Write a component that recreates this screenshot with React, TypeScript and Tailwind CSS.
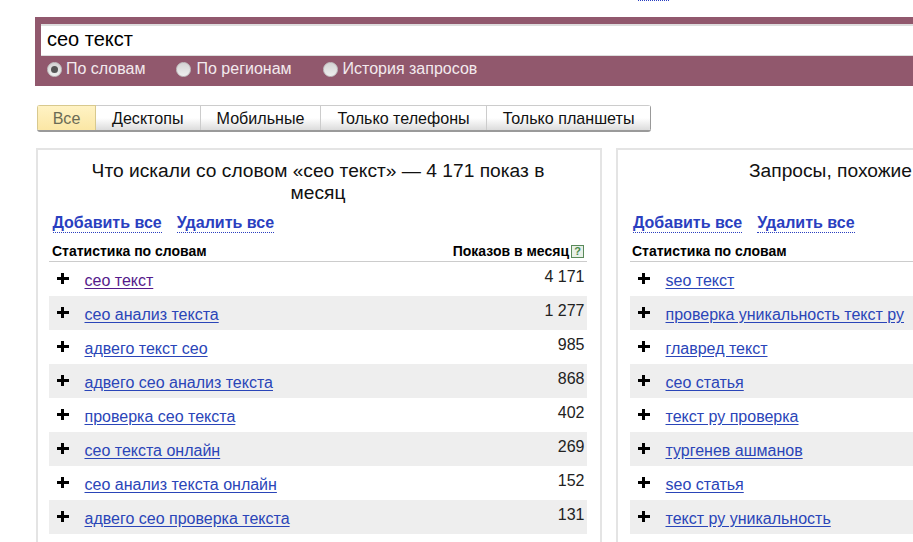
const left: [string, string, boolean][] = [
  ["сео текст", "4 171", true],
  ["сео анализ текста", "1 277", false],
  ["адвего текст сео", "985", false],
  ["адвего сео анализ текста", "868", false],
  ["проверка сео текста", "402", false],
  ["сео текста онлайн", "269", false],
  ["сео анализ текста онлайн", "152", false],
  ["адвего сео проверка текста", "131", false],
];
const right: string[] = [
  "seo текст",
  "проверка уникальность текст ру",
  "главред текст",
  "сео статья",
  "текст ру проверка",
  "тургенев ашманов",
  "seo статья",
  "текст ру уникальность",
];

function Plus() {
  return (
    <span className="relative block w-[12px] h-[12px] shrink-0">
      <span className="absolute left-0 top-[4px] w-[12px] h-[3px] bg-black" />
      <span className="absolute left-[4px] top-0 w-[3px] h-[11px] bg-black" />
    </span>
  );
}

function Row({ text, count, gray, visited }: { text: string; count?: string; gray: boolean; visited: boolean }) {
  return (
    <div className={`flex items-start h-[34px] ${gray ? "bg-[#eeeeee]" : ""}`}>
      <div className="w-[35.5px] pl-[8px] pt-[11px] shrink-0"><Plus /></div>
      <a className={`mt-[9px] text-[16px] leading-[20px] underline underline-offset-[2px] ${visited ? "text-[#551a8b]" : "text-[#2a45b8]"}`}>{text}</a>
      {count && <span className="ml-auto mr-[2.5px] mt-[5px] text-[16px] leading-[20px] text-[#222]">{count}</span>}
    </div>
  );
}

function Actions({ className }: { className: string }) {
  return (
    <div className={`flex gap-[15px] text-[16px] font-bold text-[#2a3fc0] mt-[10px] ${className}`}>
      <a className="border-b border-dotted border-[#2a3fc0] leading-[18px]">Добавить все</a>
      <a className="border-b border-dotted border-[#2a3fc0] leading-[18px]">Удалить все</a>
    </div>
  );
}

function Radio({ checked, className }: { checked?: boolean; className: string }) {
  return (
    <span className={`w-[15px] h-[15px] rounded-full bg-gradient-to-b from-[#d4d4d4] to-[#eeeeee] border border-[#c4c4c4] flex items-center justify-center shrink-0 ${className}`}>
      {checked && <span className="w-[7px] h-[7px] rounded-full bg-[#555]" />}
    </span>
  );
}

export default function App() {
  const tabs = ["Десктопы", "Мобильные", "Только телефоны", "Только планшеты"];
  return (
    <div className="w-[913px] h-[542px] overflow-hidden bg-white font-['Liberation_Sans',Arial,sans-serif] text-black">
      <div className="h-[17px] pl-[638px]"><div className="w-[31px] border-t border-dotted border-[#2a3fc0]" /></div>
      <div className="ml-[35px] h-[69px] bg-[#91586d] pt-[7px] pl-[6px]">
        <div className="h-[32px] bg-white border-t-2 border-b border-[#dddddd] pl-[6px] text-[20px] leading-[27px] text-black">сео текст</div>
        <div className="flex items-center h-[26px] text-[16px] text-[#f3eaee]">
          <Radio checked className="ml-[6px]" />
          <span className="ml-[4px]">По словам</span>
          <Radio className="ml-[31px]" />
          <span className="ml-[5px]">По регионам</span>
          <Radio className="ml-[31px]" />
          <span className="ml-[5px]">История запросов</span>
        </div>
      </div>
      <div className="flex ml-[37px] mt-[19px] h-[27px] w-fit rounded-[3px] text-[16.1px] leading-[25px] border-b-2 border-[#9a9a9a] overflow-hidden">
        <div className="w-[59px] text-center bg-gradient-to-b from-[#fff3c4] to-[#fbe7a5] text-[#6b6b55] border border-b-0 border-[#d8c98e]">Все</div>
        {tabs.map((t) => (
          <div key={t} className="px-[16px] bg-gradient-to-b from-white via-white to-[#dcdcdc] border-r border-t border-[#cccccc] last:border-r-[#999] text-[#111]">{t}</div>
        ))}
      </div>
      <div className="flex gap-[14px] ml-[36px] mt-[16px]">
        <div className="w-[566px] h-[400px] shrink-0 border-2 border-[#e4e4e4] pl-[11px] pr-[13px]">
          <h2 className="px-[30px] pt-[10px] text-center text-[19.2px] leading-[22px] font-normal text-[#111]">Что искали со словом «сео текст» — 4 171 показ в месяц</h2>
          <Actions className="pl-[3.5px]" />
          <div className="flex justify-between items-center h-[27px] pt-[6px] pl-[3px] text-[14px] font-bold border-b border-[#cccccc] mt-[2px]">
            <span>Статистика по словам</span>
            <span className="flex items-center gap-[2px] mr-[3px]">Показов в месяц<span className="w-[13px] h-[13px] border border-[#5a8a5a] bg-[#e8f0e8] text-[#4a8a4a] text-[11px] leading-[11px] text-center">?</span></span>
          </div>
          {left.map(([t, c, v], i) => <Row key={t} text={t} count={c} visited={v} gray={i % 2 === 1} />)}
        </div>
        <div className="w-[400px] h-[400px] shrink-0 border-2 border-[#e4e4e4] pl-[12px]">
          <h2 className="pl-[119px] pt-[10px] text-[19.2px] leading-[22px] font-normal text-[#111] whitespace-nowrap h-[54px]">Запросы, похожие</h2>
          <Actions className="pl-[3px]" />
          <div className="flex items-center h-[27px] pt-[6px] pl-[2px] text-[14px] font-bold border-b border-[#cccccc] mt-[2px]">Статистика по словам</div>
          {right.map((t, i) => <Row key={t} text={t} visited={false} gray={i % 2 === 1} />)}
        </div>
      </div>
    </div>
  );
}
